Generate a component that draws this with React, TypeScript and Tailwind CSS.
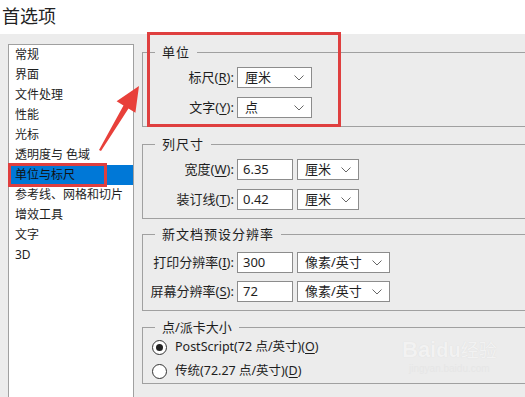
import React from "react";

const Chevron = () => (
  <svg width="10" height="6" viewBox="0 0 10 6" className="shrink-0">
    <path d="M0.5 0.5 L5 5 L9.5 0.5" fill="none" stroke="#666" strokeWidth="1" />
  </svg>
);

const Select = ({ w, text }: { w: string; text: string }) => (
  <div className={`${w} h-[21px] border border-[#8c8c8c] bg-white flex items-center justify-between pl-[7px] pr-[7px]`}>
    <span>{text}</span>
    <Chevron />
  </div>
);

const Input = ({ text }: { text: string }) => (
  <div className="w-[56px] h-[21px] border border-[#8c8c8c] bg-white flex items-center pl-[5px]">{text}</div>
);

const Label = ({ pre, key1 }: { pre: string; key1: string }) => (
  <div className="w-[94px] text-right pr-[3px] whitespace-nowrap">
    {pre}(<span className="underline underline-offset-2">{key1}</span>):
  </div>
);

const Group = ({
  legend,
  className,
  legendClass,
  children,
}: {
  legend: string;
  className: string;
  legendClass?: string;
  children: React.ReactNode;
}) => (
  <div className={`relative border border-[#a0a0a0] w-[420px] ${className}`}>
    <span className={`absolute left-[12px] -top-[10px] px-[7px] bg-[#ececec] leading-[18px] text-[13px] ${legendClass ?? "tracking-[1px]"}`}>
      {legend}
    </span>
    {children}
  </div>
);

const items = ["常规", "界面", "文件处理", "性能", "光标", "透明度与 色域", "单位与标尺", "参考线、网格和切片", "增效工具", "文字", "3D"];

export default function App() {
  return (
    <div className="relative w-[525px] h-[397px] overflow-hidden bg-[#ececec] text-[#1e1e1e] font-['Noto_Sans','Noto_Sans_CJK_SC',sans-serif]">
      <div className="h-[34px] bg-white text-[18px] leading-[33px] pl-[2px] text-[#222]">首选项</div>
      <div className="flex">
        <div className="ml-[8px] mt-[10px] w-[126px] h-[400px] border border-[#a0a0a0] bg-white text-[12px] shrink-0">
          {items.map((t, i) => (
            <div
              key={t}
              className={`h-[20px] leading-[20px] pl-[6px] whitespace-pre ${i === 6 ? "bg-[#0078d7] text-[#111]" : ""}`}
            >
              {t}
            </div>
          ))}
        </div>
        <div className="ml-[8px] flex flex-col text-[13px] shrink-0">
          <Group legend="单位" className="mt-[18px] pt-[14px] pb-[8px]">
            <div className="flex flex-col gap-[9px]">
              <div className="flex items-center h-[21px]">
                <Label pre="标尺" key1="R" />
                <Select w="w-[75px]" text="厘米" />
              </div>
              <div className="flex items-center h-[21px]">
                <Label pre="文字" key1="Y" />
                <Select w="w-[75px]" text="点" />
              </div>
            </div>
          </Group>
          <Group legend="列尺寸" className="mt-[17px] pt-[14px] pb-[8px]">
            <div className="flex flex-col gap-[9px]">
              <div className="flex items-center h-[21px]">
                <Label pre="宽度" key1="W" />
                <Input text="6.35" />
                <div className="ml-[4px]">
                  <Select w="w-[62px]" text="厘米" />
                </div>
              </div>
              <div className="flex items-center h-[21px]">
                <Label pre="装订线" key1="T" />
                <Input text="0.42" />
                <div className="ml-[4px]">
                  <Select w="w-[62px]" text="厘米" />
                </div>
              </div>
            </div>
          </Group>
          <Group legend="新文档预设分辨率" className="mt-[15px] pt-[17px] pb-[8px]">
            <div className="flex flex-col gap-[8px]">
              <div className="flex items-center h-[21px]">
                <Label pre="打印分辨率" key1="I" />
                <Input text="300" />
                <div className="ml-[4px]">
                  <Select w="w-[93px]" text="像素/英寸" />
                </div>
              </div>
              <div className="flex items-center h-[21px]">
                <Label pre="屏幕分辨率" key1="S" />
                <Input text="72" />
                <div className="ml-[4px]">
                  <Select w="w-[93px]" text="像素/英寸" />
                </div>
              </div>
            </div>
          </Group>
          <Group legend="点/派卡大小" className="mt-[16px] pt-[9px] pb-[2px]" legendClass="tracking-[0px]">
            <div className="flex flex-col gap-[4px] pl-[9px]">
              <div className="flex items-center h-[20px] gap-[8px]">
                <div className="w-[15px] h-[15px] rounded-full border border-[#333] bg-white flex items-center justify-center">
                  <div className="w-[7px] h-[7px] rounded-full bg-[#222]" />
                </div>
                <span className="whitespace-nowrap text-[12.5px]">
                  PostScript(72 点/英寸)(<span className="underline underline-offset-2">O</span>)
                </span>
              </div>
              <div className="flex items-center h-[20px] gap-[8px]">
                <div className="w-[15px] h-[15px] rounded-full border border-[#333] bg-white" />
                <span className="whitespace-nowrap text-[12.5px]">
                  传统(72.27 点/英寸)(<span className="underline underline-offset-2">D</span>)
                </span>
              </div>
            </div>
          </Group>
        </div>
      </div>

      {/* annotations */}
      <div className="absolute left-[147px] top-[32px] w-[194px] h-[95px] border-[3px] border-[#df3f3f]" />
      <div className="absolute left-[8px] top-[163px] w-[99px] h-[24px] border-[3px] border-[#df3f3f]" />
      <svg className="absolute left-0 top-0" width="525" height="397" viewBox="0 0 525 397">
        <polygon
          points="99,150 123.5,105.4 116.6,101.3 139,86 135.4,112.7 128.5,108.6 101,151"
          fill="#e8403a"
        />
      </svg>
      <div className="absolute left-[402px] top-[336px] flex flex-col items-center text-[#f2f2f2] [text-shadow:0_0_1px_#dadada]">
        <span className="text-[22px] leading-[26px] font-bold font-['Liberation_Sans',sans-serif]">
          Bai<span className="text-[20px]">du</span>
          <span className="text-[18px] font-normal font-['Noto_Sans_CJK_SC',sans-serif]">经验</span>
        </span>
        <span className="text-[10px] leading-[12px] text-[#e6e6e6] [text-shadow:none] font-['Liberation_Sans',sans-serif]">jingyan.baidu.com</span>
      </div>
    </div>
  );
}
